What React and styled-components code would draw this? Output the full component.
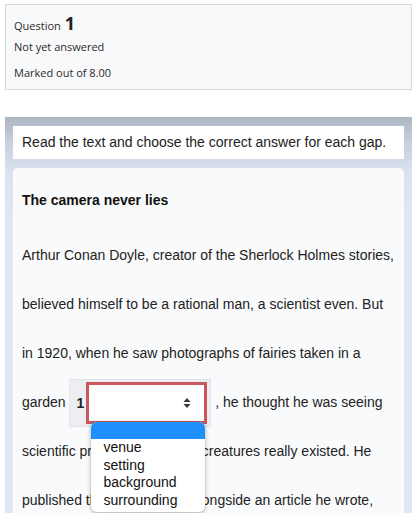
import React from "react";
import styled, { createGlobalStyle } from "styled-components";

const Global = createGlobalStyle`
  html, body { margin: 0; padding: 0; background: #ffffff; }
  body { font-family: "Liberation Sans", Arial, sans-serif; color: #1d2125; }
`;

const Page = styled.div`
  padding: 4px 5px 0 5px;
  height: 513px;
  overflow: hidden;
  box-sizing: border-box;
`;

const InfoBox = styled.div`
  background: #f8f9fa;
  border: 1px solid #d6d9dc;
  padding: 6px 9px 7px 8px;
  font-family: "Open Sans", "Noto Sans", sans-serif;
  font-size: 11px;
  color: #2b2b2b;
`;

const QTitle = styled.div`
  line-height: 24px;
  height: 24px;
  display: flex;
  align-items: baseline;
  gap: 4px;
`;

const QNum = styled.span`
  font-size: 18px;
  font-weight: 700;
  color: #222;
`;

const InfoLine = styled.div`
  line-height: 18px;
  margin-top: ${(p) => p.$mt}px;
`;

const Panel = styled.div`
  margin-top: 27px;
  padding: 9px 8px 0 8px;
  background: linear-gradient(to bottom, #aeb6c3 0px, #c9d1de 28px, #dbe3f1 56px, #dfe6f4 100px, #dfe6f4 100%);
  height: 420px;
`;

const Instructions = styled.div`
  background: #ffffff;
  height: 33px;
  line-height: 33px;
  padding: 0 9px;
  font-size: 14px;
  color: #222;
`;

const Card = styled.div`
  margin-top: 9px;
  background: #f9fafb;
  border-radius: 5px 5px 0 0;
  padding: 8px 9px 0 9px;
  height: 400px;
`;

const Title = styled.div`
  font-weight: 700;
  font-size: 14px;
  line-height: 48px;
  color: #111;
`;

const Para = styled.div`
  margin-top: 7px;
  font-size: 14px;
  line-height: 49px;
  color: #222;
`;

const Gap = styled.span`
  position: relative;
  display: inline-flex;
  align-items: center;
  vertical-align: middle;
  padding: 2px 3px 2px 6px;
  background: #eceef1;
  border: 1px solid #dfe2e6;
  border-left-color: #e6e8eb;
  line-height: normal;
`;

const GapNum = styled.span`
  font-weight: 700;
  font-size: 14px;
  color: #222;
  margin-right: 2px;
`;

const SelectBox = styled.span`
  box-sizing: border-box;
  width: 121px;
  height: 42px;
  border: 3px solid #c8585b;
  background: #ffffff;
  display: flex;
  align-items: center;
  justify-content: flex-end;
  padding-right: 13px;
`;

const Dropdown = styled.div`
  position: absolute;
  left: 21px;
  top: calc(100% - 4px);
  width: 114px;
  background: #ffffff;
  border-radius: 6px;
  overflow: hidden;
  box-shadow: 0 1px 4px rgba(0, 0, 0, 0.35);
  padding-bottom: 2px;
  z-index: 5;
`;

const Option = styled.div`
  height: ${(p) => (p.$selected ? 17 : 17.6)}px;
  line-height: 17.6px;
  padding-left: 12px;
  font-size: 14px;
  color: #111;
  background: ${(p) => (p.$selected ? "#1e8ffd" : "transparent")};
`;

const Arrows = () => (
  <svg width="8" height="12" viewBox="0 0 8 12" aria-hidden="true">
    <path d="M0.5 5 L4 1 L7.5 5 Z" fill="#343a40" />
    <path d="M0.5 7 L4 11 L7.5 7 Z" fill="#343a40" />
  </svg>
);

export default function App() {
  const options = ["", "venue", "setting", "background", "surrounding"];
  return (
    <>
      <Global />
      <Page>
        <InfoBox>
          <QTitle>
            <span>Question</span>
            <QNum>1</QNum>
          </QTitle>
          <InfoLine $mt={3}>Not yet answered</InfoLine>
          <InfoLine $mt={8}>Marked out of 8.00</InfoLine>
        </InfoBox>
        <Panel>
          <Instructions>Read the text and choose the correct answer for each gap.</Instructions>
          <Card>
            <Title>The camera never lies</Title>
            <Para>
              Arthur Conan Doyle, creator of the Sherlock Holmes stories, believed himself to be a
              rational man, a scientist even. But in 1920, when he saw photographs of fairies taken
              in a garden{" "}
              <Gap>
                <GapNum>1</GapNum>
                <SelectBox>
                  <Arrows />
                </SelectBox>
                <Dropdown>
                  {options.map((o, i) => (
                    <Option key={i} $selected={i === 0}>
                      {o}
                    </Option>
                  ))}
                </Dropdown>
              </Gap>{" "}
              , he thought he was seeing scientific proof that such tiny creatures really existed. He
              published the photographs alongside an article he wrote, and many readers believed
              them.
            </Para>
          </Card>
        </Panel>
      </Page>
    </>
  );
}
